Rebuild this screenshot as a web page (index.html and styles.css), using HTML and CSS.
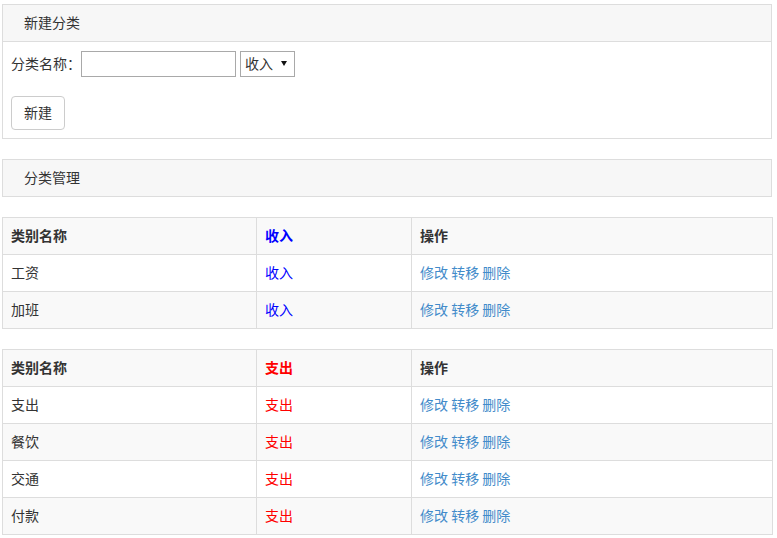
FILE: index.html
```html
<!DOCTYPE html>
<html lang="zh">
<head>
<meta charset="utf-8">
<title>分类</title>
<link rel="stylesheet" href="styles.css">
</head>
<body>
<div class="page">
  <div class="panel">
    <div class="panel-heading">新建分类</div>
    <div class="panel-body">
      <div class="form-row">
        <label class="label">分类名称：</label>
        <input class="text-input" type="text">
        <span class="select-wrap">
          <select class="select"><option>收入</option><option>支出</option></select>
        </span>
      </div>
      <button class="btn">新建</button>
    </div>
  </div>

  <div class="panel">
    <div class="panel-heading">分类管理</div>
  </div>

  <table class="table">
    <colgroup><col class="c1"><col class="c2"><col class="c3"></colgroup>
    <tbody>
      <tr class="head"><th>类别名称</th><th class="income">收入</th><th>操作</th></tr>
      <tr><td>工资</td><td class="income">收入</td><td class="ops"><a href="#">修改</a> <a href="#">转移</a> <a href="#">删除</a></td></tr>
      <tr><td>加班</td><td class="income">收入</td><td class="ops"><a href="#">修改</a> <a href="#">转移</a> <a href="#">删除</a></td></tr>
    </tbody>
  </table>

  <table class="table">
    <colgroup><col class="c1"><col class="c2"><col class="c3"></colgroup>
    <tbody>
      <tr class="head"><th>类别名称</th><th class="expense">支出</th><th>操作</th></tr>
      <tr><td>支出</td><td class="expense">支出</td><td class="ops"><a href="#">修改</a> <a href="#">转移</a> <a href="#">删除</a></td></tr>
      <tr><td>餐饮</td><td class="expense">支出</td><td class="ops"><a href="#">修改</a> <a href="#">转移</a> <a href="#">删除</a></td></tr>
      <tr><td>交通</td><td class="expense">支出</td><td class="ops"><a href="#">修改</a> <a href="#">转移</a> <a href="#">删除</a></td></tr>
      <tr><td>付款</td><td class="expense">支出</td><td class="ops"><a href="#">修改</a> <a href="#">转移</a> <a href="#">删除</a></td></tr>
    </tbody>
  </table>
</div>
</body>
</html>
```

FILE: styles.css
```css
* { box-sizing: border-box; }
html, body {
  margin: 0;
  padding: 0;
  background: #fff;
}
body {
  font-family: "Noto Sans CJK SC", "Noto Sans", sans-serif;
  font-size: 14px;
  line-height: 20px;
  color: #333;
}
.page {
  width: 770px;
  margin: 4px 0 0 2px;
}
.panel {
  border: 1px solid #ddd;
  background: #fff;
  margin-bottom: 20px;
}
.panel-heading {
  background: #f7f7f7;
  padding: 7px 21px 9px;
  height: 36px;
}
.panel-body {
  border-top: 1px solid #ddd;
  padding: 9px 8px 8px;
}
.form-row {
  display: flex;
  align-items: center;
  height: 26px;
}
.label {
  width: 70px;
  padding-bottom: 2px;
}
.text-input {
  width: 155px;
  height: 26px;
  border: 1px solid #a9a9a9;
  padding: 2px 4px;
  font: inherit;
  margin: 0;
}
.select-wrap {
  position: relative;
  margin-left: 4px;
  display: inline-block;
}
.select {
  -webkit-appearance: none;
  appearance: none;
  width: 55px;
  height: 26px;
  border: 1px solid #a9a9a9;
  border-radius: 0;
  background: #fff;
  font: inherit;
  color: #333;
  padding: 0 4px 2px;
  margin: 0;
  display: block;
}
.select-wrap::after {
  content: "";
  position: absolute;
  right: 8px;
  top: 10px;
  border-left: 3px solid transparent;
  border-right: 3px solid transparent;
  border-top: 5px solid #111;
  pointer-events: none;
}
.btn {
  display: block;
  margin-top: 19px;
  width: 54px;
  height: 34px;
  border: 1px solid #ccc;
  border-radius: 4px;
  background: #fff;
  font: inherit;
  color: #333;
  padding: 5px 12px 7px;
}
.table {
  width: 770px;
  border-collapse: collapse;
  table-layout: fixed;
  margin-bottom: 20px;
}
.c1 { width: 254px; }
.c2 { width: 155px; }
.c3 { width: 361px; }
.table th,
.table td {
  border: 1px solid #ddd;
  padding: 7px 8px 9px;
  text-align: left;
  vertical-align: top;
  line-height: 20px;
  height: 37px;
}
.table th { font-weight: bold; }
.table tbody tr:nth-of-type(odd) { background: #f9f9f9; }
.income { color: #0000ff; }
.expense { color: #ff0000; }
.ops a {
  color: #428bca;
  text-decoration: none;
}
```
